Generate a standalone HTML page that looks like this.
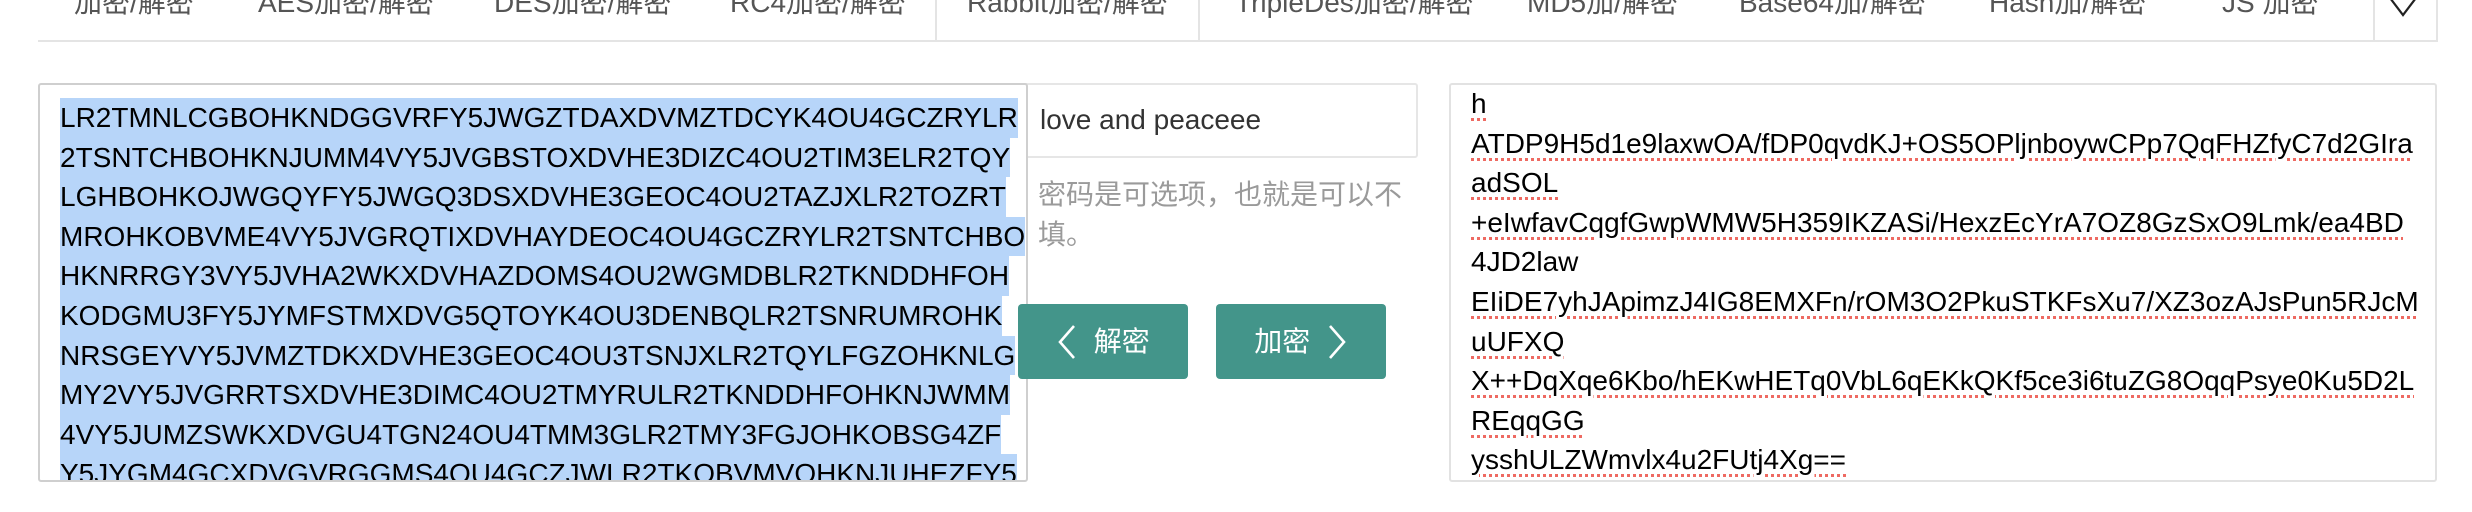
<!DOCTYPE html>
<html><head><meta charset="utf-8"><style>
*{margin:0;padding:0;box-sizing:border-box}
body{width:2472px;height:512px;overflow:hidden;background:#fff;font-family:"Liberation Sans","Noto Sans CJK SC",sans-serif;font-size:28px;position:relative}
.tab{position:absolute;top:-17px;line-height:40px;color:#555;white-space:nowrap}
.sep{position:absolute;top:0;width:2px;height:41px;background:#e4e4e4}
.ta{position:absolute;border:2px solid #cfcfcf;border-radius:3px;overflow:hidden;background:#fff}
.ln{height:39.6px;line-height:39.6px;white-space:nowrap;color:#000}
.hl{display:inline-block;background:#b7d5f9;height:39.6px}
.sp{text-decoration:underline dotted #ee6a62;text-decoration-thickness:3px;text-underline-offset:5px}
.btn{position:absolute;top:304px;height:75px;width:170px;background:#43958a;border-radius:4px;color:#fff;line-height:75px;text-align:center}
.btn svg{vertical-align:middle;position:relative;top:-2px}
</style></head><body>
<div class="tab" style="left:74px">加密/解密</div>
<div class="tab" style="left:258px">AES加密/解密</div>
<div class="tab" style="left:494px">DES加密/解密</div>
<div class="tab" style="left:730px">RC4加密/解密</div>
<div class="sep" style="left:935px"></div>
<div class="tab" style="left:967px">Rabbit加密/解密</div>
<div class="sep" style="left:1198px"></div>
<div class="tab" style="left:1235px">TripleDes加密/解密</div>
<div class="tab" style="left:1527px">MD5加/解密</div>
<div class="tab" style="left:1739px">Base64加/解密</div>
<div class="tab" style="left:1989px">Hash加/解密</div>
<div class="tab" style="left:2222px">JS 加密</div>
<div class="sep" style="left:2373px"></div>
<div class="sep" style="left:2436px"></div>
<svg style="position:absolute;left:2384px;top:0" width="40" height="20"><polyline points="3,-6 19,15 35,-6" fill="none" stroke="#222" stroke-width="2.2"/></svg>
<div style="position:absolute;left:38px;top:40px;width:2400px;height:2px;background:#e4e4e4"></div>

<div style="position:absolute;left:1019px;top:83px;width:399px;height:75px;border:2px solid #e6e6e6;border-radius:3px"></div>
<div style="position:absolute;left:1040px;top:100px;line-height:40px;color:#333">love and peaceee</div>
<div style="position:absolute;left:1038px;top:175px;width:380px;line-height:40px;color:#9a9a9a">密码是可选项，也就是可以不填。</div>

<div class="ta" style="left:38px;top:83px;width:990px;height:399px">
<div style="position:absolute;left:20px;top:13px">
<div class="ln"><span class="hl">LR2TMNLCGBOHKNDGGVRFY5JWGZTDAXDVMZTDCYK4OU4GCZRYLR</span></div>
<div class="ln"><span class="hl">2TSNTCHBOHKNJUMM4VY5JVGBSTOXDVHE3DIZC4OU2TIM3ELR2TQY</span></div>
<div class="ln"><span class="hl">LGHBOHKOJWGQYFY5JWGQ3DSXDVHE3GEOC4OU2TAZJXLR2TOZRT</span></div>
<div class="ln"><span class="hl">MROHKOBVME4VY5JVGRQTIXDVHAYDEOC4OU4GCZRYLR2TSNTCHBO</span></div>
<div class="ln"><span class="hl">HKNRRGY3VY5JVHA2WKXDVHAZDOMS4OU2WGMDBLR2TKNDDHFOH</span></div>
<div class="ln"><span class="hl">KODGMU3FY5JYMFSTMXDVG5QTOYK4OU3DENBQLR2TSNRUMROHK</span></div>
<div class="ln"><span class="hl">NRSGEYVY5JVMZTDKXDVHE3GEOC4OU3TSNJXLR2TQYLFGZOHKNLG</span></div>
<div class="ln"><span class="hl">MY2VY5JVGRRTSXDVHE3DIMC4OU2TMYRULR2TKNDDHFOHKNJWMM</span></div>
<div class="ln"><span class="hl">4VY5JUMZSWKXDVGU4TGN24OU4TMM3GLR2TMY3FGJOHKOBSG4ZF</span></div>
<div class="ln"><span class="hl">Y5JYGM4GCXDVGVRGGMS4OU4GCZJWLR2TKOBVMVOHKNJUHEZFY5</span></div>
</div></div>

<div class="btn" style="left:1018px"><svg width="22" height="36"><polyline points="18,2 4,18 18,34" fill="none" stroke="#fff" stroke-width="2.6"/></svg>&nbsp; 解密</div>
<div class="btn" style="left:1216px">加密 &nbsp;<svg width="22" height="36"><polyline points="4,2 18,18 4,34" fill="none" stroke="#fff" stroke-width="2.6"/></svg></div>

<div class="ta" style="left:1449px;top:83px;width:988px;height:399px;border-color:#e2e2e2">
<div style="position:absolute;left:20px;top:-1px">
<div class="ln"><span class="sp">h</span></div>
<div class="ln"><span class="sp">ATDP9H5d1e9laxwOA/fDP0qvdKJ+OS5OPljnboywCPp7QqFHZfyC7d2GIra</span></div>
<div class="ln"><span class="sp">adSOL</span></div>
<div class="ln"><span class="sp">+eIwfavCqgfGwpWMW5H359IKZASi/HexzEcYrA7OZ8GzSxO9Lmk/ea4BD</span></div>
<div class="ln">4JD2law</div>
<div class="ln"><span class="sp">EIiDE7yhJApimzJ4IG8EMXFn/rOM3O2PkuSTKFsXu7/XZ3ozAJsPun5RJcM</span></div>
<div class="ln"><span class="sp">uUFXQ</span></div>
<div class="ln"><span class="sp">X++DqXqe6Kbo/hEKwHETq0VbL6qEKkQKf5ce3i6tuZG8OqqPsye0Ku5D2L</span></div>
<div class="ln"><span class="sp">REqqGG</span></div>
<div class="ln"><span class="sp">ysshULZWmvlx4u2FUtj4Xg==</span></div>
</div></div>
</body></html>
